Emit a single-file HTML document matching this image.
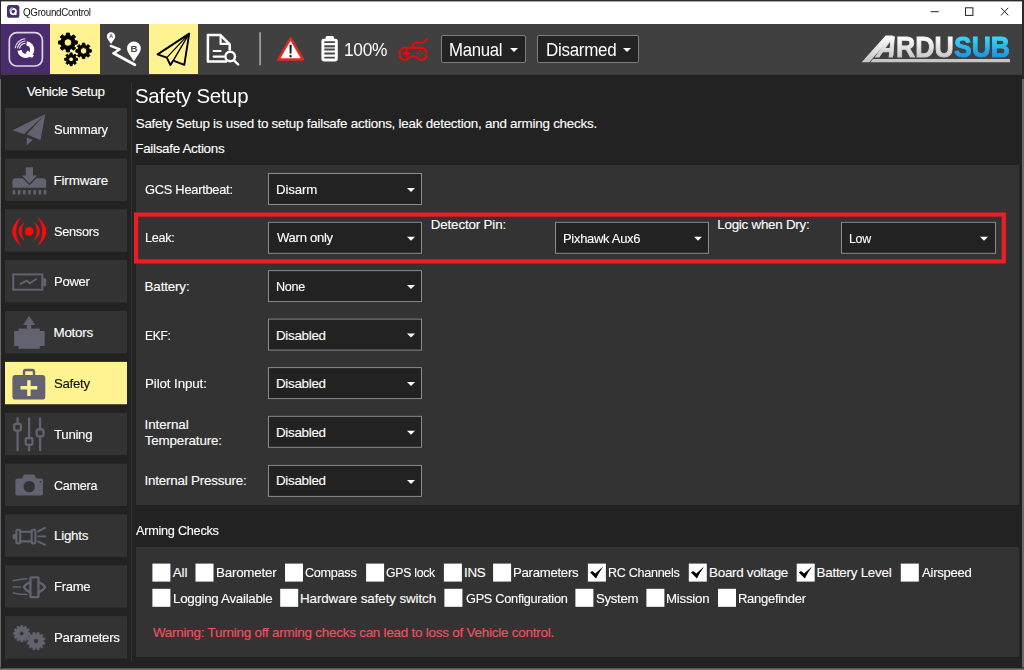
<!DOCTYPE html>
<html lang="en">
<head>
<meta charset="utf-8">
<title>QGroundControl - Safety Setup</title>
<style>
*{box-sizing:border-box;margin:0;padding:0}
html,body{width:1024px;height:670px;overflow:hidden;background:#686868}
body{position:relative;font-family:"Liberation Sans",sans-serif;color:#fff;-webkit-font-smoothing:antialiased}
.abs,.win *{position:absolute}
#frameTop{position:absolute;left:0;top:0;width:1024px;height:79px;background:#2a2a2a}
#frameBottom{position:absolute;left:0;top:667px;width:1024px;height:3px;background:linear-gradient(#3c3c3c 0,#3c3c3c 1px,#525252 1px,#525252 2px,#727272 2px)}
.win{position:absolute;left:1px;top:1px;width:1021px;height:667px;background:#222;overflow:hidden}
#titlebar{left:0;top:0;width:1021px;height:23px;background:#fff}
#toolbar{left:0;top:23px;width:1021px;height:51px;background:#404040}
.tb{top:0;height:50px}
.dd{background:#222;border:1px solid #7d7d7d;border-radius:2px}
.arrow{width:0;height:0;border-left:4.2px solid transparent;border-right:4.2px solid transparent;border-top:4.6px solid #fff}
#sidebar{left:0;top:73px;width:131px;height:594px}
.sb{left:4px;width:122px;height:42px;background:#333;transform-origin:0 0}
.sb.sel{background:#fff291}
.sb svg{left:0;top:0}
#vline{left:130px;top:82px;width:1px;height:578px;background:#343434}
.panel{background:#333}
.cb{width:18px;height:18px;background:#fff}
.combo{height:32px;width:154px;background:#222;border:1px solid #8c8c8c}
#texts{position:absolute;left:0;top:0;width:1024px;height:670px;pointer-events:none}
.t{position:absolute;white-space:pre;line-height:1;font-family:"Liberation Sans",sans-serif;transform-origin:0 0}
.t.s{-webkit-text-stroke:0.12px currentColor}
svg{overflow:visible}
#brand{left:0;top:0;width:1021px;height:74px;font-family:"Liberation Sans",sans-serif;font-weight:700;font-size:29.6px;line-height:1;white-space:nowrap;pointer-events:none}
#brand span{top:31px;display:block;transform-origin:0 100%;-webkit-background-clip:text;background-clip:text;color:transparent;-webkit-text-stroke:1px transparent}
#brand .w{background-image:linear-gradient(#fff 15%,#c6c6c6 88%)}
#brand .b{background-image:linear-gradient(#3ad8fa 15%,#1c8ee0 88%)}
</style>
</head>
<body>
<div id="frameTop"></div>
<div id="frameBottom"></div>
<div class="win">
<!-- ===== window title bar ===== -->
<div id="titlebar">
  <div id="tedge" class="abs" style="left:0;top:0;width:1021px;height:1px;background:#a9a9a9"></div>
  <svg class="abs" style="left:5.8px;top:3.9px" width="13" height="13" viewBox="0 0 13 13">
    <rect x="0" y="0" width="12.4" height="12.8" rx="2.6" fill="#4a2c6d"/>
    <circle cx="6.3" cy="6.6" r="2.7" fill="none" stroke="#fff" stroke-width="1.7"/>
    <path d="M7.2 7.6 L9.4 9.6" stroke="#fff" stroke-width="1.6"/>
    <path d="M3 6 A3.4 3.4 0 0 1 6 3" stroke="#7fb4e6" stroke-width="2" fill="none"/>
  </svg>
  <svg class="abs" style="left:900px;top:0" width="121" height="23" viewBox="0 0 121 23">
    <path d="M29.7 10.7 H37.7" stroke="#222" stroke-width="1" fill="none"/>
    <rect x="64.5" y="6.8" width="7.4" height="7.6" stroke="#222" stroke-width="1" fill="none"/>
    <path d="M100 6.8 L107.3 14.4 M107.3 6.8 L100 14.4" stroke="#222" stroke-width="1" fill="none"/>
  </svg>
</div>
<!-- ===== main toolbar ===== -->
<div id="toolbar">
  <div class="abs" style="left:0;top:50px;width:1021px;height:1px;background:#3a3a3a"></div>
  <div class="tb" style="left:0;width:49px;background:#4a2c6d"></div>
  <div class="tb" style="left:49px;width:50px;background:#fff291"></div>
  <div class="tb" style="left:148px;width:49px;background:#fff291"></div>
  <div class="dd" style="left:440px;top:11px;width:85px;height:28px"></div>
  <div class="arrow" style="left:508.9px;top:24.1px"></div>
  <div class="dd" style="left:536px;top:11px;width:102px;height:28px"></div>
  <div class="arrow" style="left:622.1px;top:23.8px"></div>
</div>
<svg class="abs" id="tbicons" style="left:-1px;top:-1px" width="1024" height="80" viewBox="0 0 1024 80">
  <!-- QGC logo -->
  <rect x="9.3" y="32.6" width="33.1" height="33.4" rx="7.6" fill="none" stroke="#dcd3e7" stroke-width="1.7"/>
  <path d="M26.62 43.35 A6.3 6.3 0 1 1 19.6 50.37" stroke="#fff" stroke-width="4.3" fill="none"/>
  <path d="M26.7 51.7 L33 56.7" stroke="#fff" stroke-width="3.1"/>
  <path d="M15.15 48.1 A10.8 10.8 0 0 1 25.3 38.8" stroke="#ece5f4" stroke-width="1.15" fill="none"/>
  <path d="M17.35 48.4 A8.6 8.6 0 0 1 25.4 41" stroke="#ece5f4" stroke-width="1.15" fill="none"/>
  <path d="M19.5 48.7 A6.4 6.4 0 0 1 25.5 43.2" stroke="#ece5f4" stroke-width="1.15" fill="none"/>
  <!-- setup gears -->
  <path fill="#000" fill-rule="evenodd" stroke="#000" stroke-width="1" stroke-linejoin="round" d="M74.91 40.87 L77.28 40.99 L77.28 44.01 L74.91 44.13 L74.01 46.31 L75.60 48.07 L73.47 50.20 L71.71 48.61 L69.53 49.51 L69.41 51.88 L66.39 51.88 L66.27 49.51 L64.09 48.61 L62.33 50.20 L60.20 48.07 L61.79 46.31 L60.89 44.13 L58.52 44.01 L58.52 40.99 L60.89 40.87 L61.79 38.69 L60.20 36.93 L62.33 34.80 L64.09 36.39 L66.27 35.49 L66.39 33.12 L69.41 33.12 L69.53 35.49 L71.71 36.39 L73.47 34.80 L75.60 36.93 L74.01 38.69 Z M64.05 42.50 a3.85 3.85 0 1 0 7.70 0 a3.85 3.85 0 1 0 -7.70 0 Z"/>
  <path fill="#000" fill-rule="evenodd" stroke="#000" stroke-width="1" stroke-linejoin="round" d="M89.35 49.57 L91.30 49.66 L91.30 52.14 L89.35 52.23 L88.61 54.02 L89.92 55.47 L88.17 57.22 L86.72 55.91 L84.93 56.65 L84.84 58.60 L82.36 58.60 L82.27 56.65 L80.48 55.91 L79.03 57.22 L77.28 55.47 L78.59 54.02 L77.85 52.23 L75.90 52.14 L75.90 49.66 L77.85 49.57 L78.59 47.78 L77.28 46.33 L79.03 44.58 L80.48 45.89 L82.27 45.15 L82.36 43.20 L84.84 43.20 L84.93 45.15 L86.72 45.89 L88.17 44.58 L89.92 46.33 L88.61 47.78 Z M80.30 50.90 a3.30 3.30 0 1 0 6.60 0 a3.30 3.30 0 1 0 -6.60 0 Z"/>
  <path fill="#000" fill-rule="evenodd" stroke="#000" stroke-width="0.9" stroke-linejoin="round" d="M75.87 58.19 L77.52 58.27 L77.52 60.33 L75.87 60.41 L75.26 61.89 L76.37 63.11 L74.91 64.57 L73.69 63.46 L72.21 64.07 L72.13 65.72 L70.07 65.72 L69.99 64.07 L68.51 63.46 L67.29 64.57 L65.83 63.11 L66.94 61.89 L66.33 60.41 L64.68 60.33 L64.68 58.27 L66.33 58.19 L66.94 56.71 L65.83 55.49 L67.29 54.03 L68.51 55.14 L69.99 54.53 L70.07 52.88 L72.13 52.88 L72.21 54.53 L73.69 55.14 L74.91 54.03 L76.37 55.49 L75.26 56.71 Z M68.70 59.30 a2.40 2.40 0 1 0 4.80 0 a2.40 2.40 0 1 0 -4.80 0 Z"/>
  <!-- plan icon -->
  <path fill="#fff" d="M111 44 C109.4 41 106.8 39 106.8 36.5 A4.2 4.2 0 0 1 115.2 36.5 C115.2 39 112.6 41 111 44 Z"/>
  <text x="111" y="38.4" font-family="Liberation Sans, sans-serif" font-weight="700" font-size="5.2" fill="#4a4a4a" text-anchor="middle">A</text>
  <path fill="none" stroke="#fff" stroke-width="2.3" stroke-linecap="round" stroke-linejoin="round" d="M110.7 45.9 L119.7 49.3 L113.7 53.2"/>
  <path fill="none" stroke="#fff" stroke-width="2.8" stroke-linecap="round" d="M113.7 53.2 L134.8 64.8"/>
  <path fill="#fff" d="M133.9 61.6 C131.3 56.6 127 52.7 127 48.3 A6.9 6.9 0 0 1 140.8 48.3 C140.8 52.7 136.5 56.6 133.9 61.6 Z"/>
  <text x="133.9" y="52" font-family="Liberation Sans, sans-serif" font-weight="700" font-size="9.6" fill="#4a4a4a" text-anchor="middle">B</text>
  <!-- fly icon -->
  <path fill="none" stroke="#000" stroke-width="1.9" stroke-linejoin="round" d="M189.2 33.6 L157.6 54.4 L166.8 57.7 L170.4 65 L173.3 60.6 L184.3 64.8 Z"/>
  <path fill="none" stroke="#000" stroke-width="1.2" stroke-linejoin="round" d="M189.2 33.6 L166.8 57.7 M189.2 33.6 L173.3 60.6 M189.2 33.6 L170.4 65"/>
  <!-- analyze icon -->
  <path fill="none" stroke="#fff" stroke-width="2.5" stroke-linejoin="round" d="M227 61.5 H207.9 V34.9 H220.2 L229.7 44.4 V50.5"/>
  <path fill="none" stroke="#fff" stroke-width="2.2" stroke-linejoin="round" d="M220.6 35.5 V43.9 H229.2"/>
  <path fill="none" stroke="#fff" stroke-width="2.1" stroke-linecap="round" d="M213.6 51 H220.6 M213.6 56.6 H224"/>
  <circle cx="230.2" cy="56.5" r="4.8" fill="#404040" stroke="#fff" stroke-width="2.4"/>
  <path d="M234.2 60.6 L238.2 64.5" stroke="#fff" stroke-width="2.4" stroke-linecap="round"/>
  <!-- separator -->
  <rect x="259.2" y="32.3" width="1.8" height="33" fill="#9c9c9c"/>
  <!-- message / warning triangle -->
  <path fill="#fff" stroke="#e12a21" stroke-width="2.5" stroke-linejoin="round" d="M290.6 38.3 L302.9 59.5 H278.4 Z"/>
  <text x="290.6" y="56.8" font-family="Liberation Sans, sans-serif" font-weight="400" font-size="16.6" fill="#000" stroke="#000" stroke-width="0.35" text-anchor="middle">!</text>
  <!-- battery -->
  <rect x="325.6" y="35.9" width="8.4" height="5" rx="1.6" fill="#fff"/>
  <rect x="321.4" y="38.7" width="16.4" height="22.7" rx="2.4" fill="#fff"/>
  <rect x="324.3" y="47" width="10.6" height="1.8" fill="#b4b4b4"/>
  <g fill="#474747">
    <rect x="324.3" y="41.2" width="10.6" height="1.9" rx="0.4"/>
    <rect x="324.3" y="45.2" width="10.6" height="1.9" rx="0.4"/>
    <rect x="324.3" y="48.7" width="10.6" height="1.9" rx="0.4"/>
    <rect x="324.3" y="52.6" width="10.6" height="1.9" rx="0.4"/>
    <rect x="324.3" y="56.7" width="10.6" height="1.9" rx="0.4"/>
  </g>
  <!-- joystick / RC -->
  <g fill="none" stroke="#ee0808" stroke-width="1.9" stroke-linecap="round" stroke-linejoin="round">
    <path d="M404.8 47.8 H421.2 A5.2 5.2 0 0 1 426.4 53 V55 A4.9 4.9 0 0 1 417.6 57.9 Q413 54.6 408.4 57.9 A4.9 4.9 0 0 1 399.6 55 V53 A5.2 5.2 0 0 1 404.8 47.8 Z"/>
    <path d="M412.8 46.6 C412.8 39.8 420 44.6 424 42 C425.6 41 426.4 40 426.8 38.8"/>
    <path d="M406.6 50.6 V56 M403.9 53.3 H409.3" stroke-width="2.2"/>
  </g>
  <g fill="#ee0808">
    <circle cx="419.8" cy="50.9" r="1"/><circle cx="419.8" cy="55.7" r="1"/>
    <circle cx="417.4" cy="53.3" r="1"/><circle cx="422.2" cy="53.3" r="1"/>
  </g>
  <!-- ArduSub brand -->
  <defs>
    <linearGradient id="gW" x1="0" y1="0" x2="0" y2="1"><stop offset="0" stop-color="#ffffff"/><stop offset="1" stop-color="#c4c4c4"/></linearGradient>
    <linearGradient id="gB" x1="0" y1="0" x2="0" y2="1"><stop offset="0" stop-color="#35d6f8"/><stop offset="1" stop-color="#1b8fe0"/></linearGradient>
  </defs>
  <path fill="url(#gW)" d="M861.6 62.2 L885.6 35.4 H893 L869.2 62.2 Z"/>
  <path fill="#c6c6c6" d="M873 58.9 H1010 V62.2 H870.2 Z"/>
</svg>
<div id="brand"><span class="w" style="left:872.0px;transform:scaleX(0.88) skewX(-24deg)">A</span><span class="w" style="left:895.3px;transform:scaleX(0.9)">RDU</span><span class="b" style="left:953.4px;transform:scaleX(0.895)">SUB</span></div>
<!-- ===== vehicle setup sidebar ===== -->
<div id="sidebar">
  <div class="sb" style="top:34px;transform:translateY(0.0px) scaleY(1.008)"></div>
  <div class="sb" style="top:84px;transform:translateY(0.6px) scaleY(1.008)"></div>
  <div class="sb" style="top:135px;transform:translateY(0.3px) scaleY(1.008)"></div>
  <div class="sb" style="top:186px;transform:translateY(0.1px) scaleY(1.008)"></div>
  <div class="sb" style="top:237px;transform:translateY(0.0px) scaleY(1.008)"></div>
  <div class="sb sel" style="top:287px;transform:translateY(0.9px) scaleY(1.008)"></div>
  <div class="sb" style="top:338px;transform:translateY(0.8px) scaleY(1.008)"></div>
  <div class="sb" style="top:389px;transform:translateY(0.6px) scaleY(1.008)"></div>
  <div class="sb" style="top:440px;transform:translateY(0.4px) scaleY(1.008)"></div>
  <div class="sb" style="top:491px;transform:translateY(0.3px) scaleY(1.008)"></div>
  <div class="sb" style="top:542px;transform:translateY(0.1px) scaleY(1.008)"></div>
</div>
<div id="vline"></div>
<svg class="abs" id="sbicons" style="left:-1px;top:-1px" width="140" height="670" viewBox="0 0 140 670">
  <!-- summary -->
  <g fill="#626270">
    <path d="M12.6 130.3 L45.4 114.1 L24 134.2 Z"/>
    <path d="M45.4 114.1 L40.5 139.9 L26.8 134.5 Z"/>
    <path d="M26.8 137.4 L32.8 139.7 L26.8 145.5 Z"/>
  </g>
  <!-- firmware -->
  <g fill="#626270">
    <path d="M25.8 167.2 H33 V175.4 H37.2 L29.4 183.4 L21.8 175.4 H25.8 Z"/>
    <path d="M12.4 187.8 V181.6 Q12.4 178.2 15.8 178.2 H22.6 L29.4 185.2 L36.4 178.2 H42.8 Q46.2 178.2 46.2 181.6 V187.8 Z"/>
    <rect x="12.60" y="190.1" width="2.7" height="4.4"/><rect x="17.78" y="190.1" width="2.7" height="4.4"/><rect x="22.96" y="190.1" width="2.7" height="4.4"/><rect x="28.14" y="190.1" width="2.7" height="4.4"/><rect x="33.32" y="190.1" width="2.7" height="4.4"/><rect x="38.50" y="190.1" width="2.7" height="4.4"/><rect x="43.68" y="190.1" width="2.7" height="4.4"/>
  </g>
  <!-- sensors -->
  <g fill="#fb0a0a">
    <circle cx="29.25" cy="231.4" r="4.4"/>
    <path stroke="#fb0a0a" stroke-width="0.5" stroke-linejoin="round" d="M20.40 217.40 Q4.60 231.40 20.40 245.40 Q11.40 231.40 20.40 217.40 Z M38.10 217.40 Q53.90 231.40 38.10 245.40 Q47.10 231.40 38.10 217.40 Z M24.00 222.60 Q13.60 231.40 24.00 240.20 Q18.80 231.40 24.00 222.60 Z M34.50 222.60 Q44.90 231.40 34.50 240.20 Q39.70 231.40 34.50 222.60 Z"/>
  </g>
  <!-- power -->
  <g fill="none" stroke="#626270">
    <rect x="13.3" y="274.4" width="29" height="15.3" stroke-width="2"/>
    <path d="M19.8 284.2 L26.8 280.6 L29.6 283.2 L36.8 278.8" stroke-width="1.9"/>
  </g>
  <path d="M43.2 277.6 L46.2 279 V285.4 L43.2 286.8 Z" fill="#626270"/>
  <!-- motors -->
  <g fill="#626270">
    <path d="M29.1 315.8 L35.1 325 H31.3 V329 H26.9 V325 H23.1 Z"/>
    <rect x="18.5" y="328.6" width="21.3" height="20.2"/>
    <rect x="14.1" y="331" width="30.5" height="15"/>
  </g>
  <!-- safety -->
  <rect x="12.4" y="374.9" width="32.9" height="24.7" rx="3.2" fill="#626270"/>
  <rect x="24" y="370" width="10" height="7" rx="1.8" fill="none" stroke="#626270" stroke-width="2.4"/>
  <path d="M20.5 387.7 H37.3 M28.9 380.2 V396" stroke="#fff291" stroke-width="3.4" fill="none"/>
  <!-- tuning -->
  <g fill="none" stroke="#626270" stroke-width="2.3" stroke-linecap="round">
    <path d="M17.6 418.4 V450.2 M29.1 418.4 V450.2 M40.1 418.4 V450.2"/>
    <rect x="14.2" y="423.8" width="6.8" height="6.8" rx="1.8" fill="#333"/>
    <rect x="25.7" y="438" width="6.8" height="6.8" rx="1.8" fill="#333"/>
    <rect x="36.7" y="429.5" width="6.8" height="6.8" rx="1.8" fill="#333"/>
  </g>
  <!-- camera -->
  <path fill="#626270" fill-rule="evenodd" d="M17.4 478.4 H22 L24.2 474.6 H34.2 L36.4 478.4 H41 Q43 478.4 43 480.4 V493.6 Q43 495.6 41 495.6 H17.4 Q15.4 495.6 15.4 493.6 V480.4 Q15.4 478.4 17.4 478.4 Z M23.5 486.6 a5.7 5.7 0 1 0 11.4 0 a5.7 5.7 0 1 0 -11.4 0 Z M39.6 481.8 a0.9 0.9 0 1 0 1.8 0 a0.9 0.9 0 1 0 -1.8 0 Z"/>
  <!-- lights -->
  <g fill="none" stroke="#626270" stroke-width="2.1" stroke-linecap="round">
    <rect x="16.4" y="529.8" width="3.8" height="13.6" rx="1.2"/>
    <rect x="31.6" y="529.8" width="3.8" height="13.6" rx="1.2"/>
    <path d="M20.2 531.8 H31.6 M20.2 541.4 H31.6"/>
    <rect x="13.4" y="534.6" width="2.6" height="4" rx="0.8" fill="#626270" stroke-width="1.4"/>
    <path d="M38 531.4 L45 527.9 M38.2 536.4 H45.4 M38 541.4 L45 544.9" stroke-width="1.8"/>
  </g>
  <!-- frame -->
  <g fill="none" stroke="#626270" stroke-width="2.3" stroke-linejoin="round" stroke-linecap="round">
    <rect x="30.4" y="577.3" width="8.1" height="19.9" rx="0.6"/>
    <path d="M30.2 582 Q25.4 584.2 23.8 587.1 Q25.4 590 30.2 592.4"/>
    <path d="M38.7 582 Q43.5 584.2 45.1 587.1 Q43.5 590 38.7 592.4"/>
    <path d="M13.2 580.7 Q20 579.2 27 578.7 M13.2 587.1 H20.2 M13.2 593 Q20 594.6 27 594.6" stroke-width="1.5"/>
  </g>
  <!-- parameters -->
  <path fill="#626270" fill-rule="evenodd" stroke="#626270" stroke-width="0.5" stroke-linejoin="round" d="M28.52 632.52 L30.03 632.55 L30.03 634.65 L28.52 634.68 L28.14 636.07 L29.44 636.86 L28.39 638.68 L27.06 637.94 L26.04 638.96 L26.78 640.29 L24.96 641.34 L24.17 640.04 L22.78 640.42 L22.75 641.93 L20.65 641.93 L20.62 640.42 L19.23 640.04 L18.44 641.34 L16.62 640.29 L17.36 638.96 L16.34 637.94 L15.01 638.68 L13.96 636.86 L15.26 636.07 L14.88 634.68 L13.37 634.65 L13.37 632.55 L14.88 632.52 L15.26 631.13 L13.96 630.34 L15.01 628.52 L16.34 629.26 L17.36 628.24 L16.62 626.91 L18.44 625.86 L19.23 627.16 L20.62 626.78 L20.65 625.27 L22.75 625.27 L22.78 626.78 L24.17 627.16 L24.96 625.86 L26.78 626.91 L26.04 628.24 L27.06 629.26 L28.39 628.52 L29.44 630.34 L28.14 631.13 Z M19.60 633.60 a2.10 2.10 0 1 0 4.20 0 a2.10 2.10 0 1 0 -4.20 0 Z"/>
  <path fill="#626270" fill-rule="evenodd" stroke="#626270" stroke-width="0.5" stroke-linejoin="round" d="M43.46 641.88 L45.02 642.34 L44.43 644.54 L42.85 644.15 L42.07 645.51 L43.19 646.68 L41.58 648.29 L40.41 647.17 L39.05 647.95 L39.44 649.53 L37.24 650.12 L36.78 648.56 L35.22 648.56 L34.76 650.12 L32.56 649.53 L32.95 647.95 L31.59 647.17 L30.42 648.29 L28.81 646.68 L29.93 645.51 L29.15 644.15 L27.57 644.54 L26.98 642.34 L28.54 641.88 L28.54 640.32 L26.98 639.86 L27.57 637.66 L29.15 638.05 L29.93 636.69 L28.81 635.52 L30.42 633.91 L31.59 635.03 L32.95 634.25 L32.56 632.67 L34.76 632.08 L35.22 633.64 L36.78 633.64 L37.24 632.08 L39.44 632.67 L39.05 634.25 L40.41 635.03 L41.58 633.91 L43.19 635.52 L42.07 636.69 L42.85 638.05 L44.43 637.66 L45.02 639.86 L43.46 640.32 Z M33.70 641.10 a2.30 2.30 0 1 0 4.60 0 a2.30 2.30 0 1 0 -4.60 0 Z"/>
</svg>
<!-- ===== safety setup content ===== -->
<div id="content" style="left:131px;top:73px;width:890px;height:594px">
  <div class="panel" id="failsafe" style="left:4px;top:91px;width:883px;height:340px">
    <div class="combo" id="cb-gcs" style="left:132px;top:8px"><div class="arrow" style="left:137.7px;top:13.9px"></div></div>
    <div class="combo" id="cb-leak" style="left:132px;top:56px;transform:translate(0px,0.8px)"><div class="arrow" style="left:137.7px;top:13.9px"></div></div>
    <div class="combo" id="cb-battery" style="left:132px;top:105px;transform:translate(0px,0.1px)"><div class="arrow" style="left:137.7px;top:13.9px"></div></div>
    <div class="combo" id="cb-ekf" style="left:132px;top:153px;transform:translate(0px,0.6px)"><div class="arrow" style="left:137.7px;top:13.9px"></div></div>
    <div class="combo" id="cb-pilot" style="left:132px;top:202px;transform:translate(0px,0.1px)"><div class="arrow" style="left:137.7px;top:13.9px"></div></div>
    <div class="combo" id="cb-temp" style="left:132px;top:250px;transform:translate(0px,0.8px)"><div class="arrow" style="left:137.7px;top:13.9px"></div></div>
    <div class="combo" id="cb-pressure" style="left:132px;top:299px;transform:translate(0px,0.9px)"><div class="arrow" style="left:137.7px;top:13.9px"></div></div>
    <div class="combo" id="cb-pin" style="left:419px;top:56px;transform:translate(0px,0.8px)"><div class="arrow" style="left:137.7px;top:13.9px"></div></div>
    <div class="combo" id="cb-logic" style="left:705px;top:56px;transform:translate(0px,0.8px);width:155px"><div class="arrow" style="left:137.7px;top:13.9px"></div></div>
  </div>
  <div class="panel" id="arming" style="left:4px;top:473px;width:883px;height:110px">
    <div class="cb" style="left:16px;top:16px;transform:translate(0.4px,0.6px)"></div>
    <div class="cb" style="left:59px;top:16px;transform:translate(0.5px,0.6px)"></div>
    <div class="cb" style="left:149px;top:16px;transform:translate(0.0px,0.6px)"></div>
    <div class="cb" style="left:230px;top:16px;transform:translate(0.1px,0.6px)"></div>
    <div class="cb" style="left:307px;top:16px;transform:translate(0.9px,0.6px)"></div>
    <div class="cb" style="left:357px;top:16px;transform:translate(0.1px,0.6px)"></div>
    <div class="cb" style="left:451px;top:16px;transform:translate(0.9px,0.6px)"><svg style="left:0;top:0" width="18" height="18" viewBox="0 0 18 18"><path fill="#000" d="M2.2 8.9 L4.3 7.5 L7.5 10 Q11.2 6.2 15.3 3.1 Q11.2 8.4 8.1 14.8 Z"/></svg></div>
    <div class="cb" style="left:552px;top:16px;transform:translate(0.8px,0.6px)"><svg style="left:0;top:0" width="18" height="18" viewBox="0 0 18 18"><path fill="#000" d="M2.2 8.9 L4.3 7.5 L7.5 10 Q11.2 6.2 15.3 3.1 Q11.2 8.4 8.1 14.8 Z"/></svg></div>
    <div class="cb" style="left:660px;top:16px;transform:translate(0.7px,0.6px)"><svg style="left:0;top:0" width="18" height="18" viewBox="0 0 18 18"><path fill="#000" d="M2.2 8.9 L4.3 7.5 L7.5 10 Q11.2 6.2 15.3 3.1 Q11.2 8.4 8.1 14.8 Z"/></svg></div>
    <div class="cb" style="left:764px;top:16px;transform:translate(0.8px,0.6px)"></div>
    <div class="cb" style="left:16px;top:41px;transform:translate(0.4px,0.8px)"></div>
    <div class="cb" style="left:144px;top:41px;transform:translate(0.2px,0.8px)"></div>
    <div class="cb" style="left:308px;top:41px;transform:translate(0.4px,0.8px)"></div>
    <div class="cb" style="left:439px;top:41px;transform:translate(0.4px,0.8px)"></div>
    <div class="cb" style="left:510px;top:41px;transform:translate(0.4px,0.8px)"></div>
    <div class="cb" style="left:582px;top:41px;transform:translate(0.0px,0.8px)"></div>
  </div>
</div>
<svg class="abs" id="hl" style="left:-1px;top:-1px" width="1024" height="670" viewBox="0 0 1024 670"><rect x="136.1" y="214.6" width="867.7" height="46.8" fill="none" stroke="#ee1c24" stroke-width="4.2"/></svg>
</div><!-- /.win -->

<div id="texts">
<span class="t" style="left:23.2px;top:8px;font-size:10.4px;letter-spacing:-0.30px;transform:scaleX(0.940);color:#111">QGroundControl</span>
<span class="t" style="left:344.4px;top:42px;font-size:17.6px;letter-spacing:-0.30px;transform:scaleX(0.983);color:#fff">100%</span>
<span class="t" style="left:449.1px;top:42px;font-size:17.6px;letter-spacing:-0.30px;transform:scaleX(0.952);color:#fff">Manual</span>
<span class="t" style="left:545.5px;top:42px;font-size:17.6px;letter-spacing:-0.30px;transform:scaleX(0.966);color:#fff">Disarmed</span>
<span class="t s" style="left:26.7px;top:85px;font-size:13.4px;letter-spacing:-0.30px;color:#fff">Vehicle Setup</span>
<span class="t s" style="left:53.5px;top:123px;font-size:13.4px;letter-spacing:-0.30px;transform:scaleX(0.972);color:#fff">Summary</span>
<span class="t s" style="left:53.5px;top:174px;font-size:13.4px;letter-spacing:-0.16px;color:#fff">Firmware</span>
<span class="t s" style="left:53.5px;top:225px;font-size:13.4px;letter-spacing:-0.30px;transform:scaleX(0.953);color:#fff">Sensors</span>
<span class="t s" style="left:53.6px;top:275px;font-size:13.4px;letter-spacing:-0.30px;transform:scaleX(0.975);color:#fff">Power</span>
<span class="t s" style="left:53.5px;top:326px;font-size:13.4px;letter-spacing:-0.26px;color:#fff">Motors</span>
<span class="t s" style="left:53.5px;top:377px;font-size:13.4px;letter-spacing:-0.30px;transform:scaleX(0.988);color:#111">Safety</span>
<span class="t s" style="left:54.4px;top:428px;font-size:13.4px;letter-spacing:-0.30px;transform:scaleX(0.990);color:#fff">Tuning</span>
<span class="t s" style="left:54.1px;top:479px;font-size:13.4px;letter-spacing:-0.30px;transform:scaleX(0.942);color:#fff">Camera</span>
<span class="t s" style="left:54.0px;top:529px;font-size:13.4px;letter-spacing:-0.27px;color:#fff">Lights</span>
<span class="t s" style="left:53.6px;top:580px;font-size:13.4px;letter-spacing:-0.30px;transform:scaleX(0.974);color:#fff">Frame</span>
<span class="t s" style="left:53.6px;top:631px;font-size:13.4px;letter-spacing:-0.30px;transform:scaleX(0.992);color:#fff">Parameters</span>
<span class="t" style="left:135.2px;top:86px;font-size:20.6px;letter-spacing:-0.30px;transform:scaleX(0.990);color:#fff">Safety Setup</span>
<span class="t s" style="left:135.7px;top:117px;font-size:13.4px;letter-spacing:-0.23px;color:#fff">Safety Setup is used to setup failsafe actions, leak detection, and arming checks.</span>
<span class="t s" style="left:135.3px;top:142px;font-size:13.4px;letter-spacing:-0.30px;color:#fff">Failsafe Actions</span>
<span class="t s" style="left:144.6px;top:183px;font-size:13.4px;letter-spacing:-0.30px;transform:scaleX(0.963);color:#fff">GCS Heartbeat:</span>
<span class="t s" style="left:144.7px;top:231px;font-size:13.4px;letter-spacing:-0.30px;transform:scaleX(0.947);color:#fff">Leak:</span>
<span class="t s" style="left:144.6px;top:280px;font-size:13.4px;letter-spacing:-0.16px;color:#fff">Battery:</span>
<span class="t s" style="left:145.0px;top:329px;font-size:13.4px;letter-spacing:-0.30px;transform:scaleX(0.893);color:#fff">EKF:</span>
<span class="t s" style="left:144.7px;top:377px;font-size:13.4px;letter-spacing:-0.10px;transform:scaleX(0.996);color:#fff">Pilot Input:</span>
<span class="t s" style="left:144.5px;top:418px;font-size:13.4px;letter-spacing:-0.08px;color:#fff">Internal</span>
<span class="t s" style="left:144.7px;top:434px;font-size:13.4px;letter-spacing:-0.14px;color:#fff">Temperature:</span>
<span class="t s" style="left:144.5px;top:474px;font-size:13.4px;letter-spacing:-0.20px;color:#fff">Internal Pressure:</span>
<span class="t s" style="left:430.8px;top:218px;font-size:13.4px;letter-spacing:-0.17px;color:#fff">Detector Pin:</span>
<span class="t s" style="left:717.3px;top:218px;font-size:13.4px;letter-spacing:-0.26px;color:#fff">Logic when Dry:</span>
<span class="t s" style="left:276.1px;top:183px;font-size:13.4px;letter-spacing:-0.12px;transform:scaleX(0.991);color:#fff">Disarm</span>
<span class="t s" style="left:277.0px;top:231px;font-size:13.4px;letter-spacing:-0.30px;transform:scaleX(0.978);color:#fff">Warn only</span>
<span class="t s" style="left:276.1px;top:280px;font-size:13.4px;letter-spacing:-0.30px;transform:scaleX(0.941);color:#fff">None</span>
<span class="t s" style="left:276.0px;top:329px;font-size:13.4px;letter-spacing:-0.30px;color:#fff">Disabled</span>
<span class="t s" style="left:276.0px;top:377px;font-size:13.4px;letter-spacing:-0.30px;color:#fff">Disabled</span>
<span class="t s" style="left:276.0px;top:426px;font-size:13.4px;letter-spacing:-0.30px;color:#fff">Disabled</span>
<span class="t s" style="left:276.0px;top:474px;font-size:13.4px;letter-spacing:-0.30px;color:#fff">Disabled</span>
<span class="t s" style="left:562.6px;top:232px;font-size:13.4px;letter-spacing:-0.30px;transform:scaleX(0.968);color:#fff">Pixhawk Aux6</span>
<span class="t s" style="left:849.3px;top:232px;font-size:13.4px;letter-spacing:-0.30px;transform:scaleX(0.924);color:#fff">Low</span>
<span class="t s" style="left:136.0px;top:524px;font-size:13.4px;letter-spacing:-0.30px;transform:scaleX(0.951);color:#fff">Arming Checks</span>
<span class="t s" style="left:172.8px;top:566px;font-size:13.4px;letter-spacing:-0.14px;color:#fff">All</span>
<span class="t s" style="left:216.0px;top:566px;font-size:13.4px;letter-spacing:-0.25px;transform:scaleX(1.003);color:#fff">Barometer</span>
<span class="t s" style="left:305.3px;top:566px;font-size:13.4px;letter-spacing:-0.30px;transform:scaleX(0.945);color:#fff">Compass</span>
<span class="t s" style="left:385.8px;top:566px;font-size:13.4px;letter-spacing:-0.30px;transform:scaleX(0.915);color:#fff">GPS lock</span>
<span class="t s" style="left:464.0px;top:566px;font-size:13.4px;letter-spacing:-0.30px;color:#fff">INS</span>
<span class="t s" style="left:512.9px;top:566px;font-size:13.4px;letter-spacing:-0.30px;transform:scaleX(0.986);color:#fff">Parameters</span>
<span class="t s" style="left:607.6px;top:566px;font-size:13.4px;letter-spacing:-0.30px;transform:scaleX(0.937);color:#fff">RC Channels</span>
<span class="t s" style="left:709.1px;top:566px;font-size:13.4px;letter-spacing:-0.29px;color:#fff">Board voltage</span>
<span class="t s" style="left:816.6px;top:566px;font-size:13.4px;letter-spacing:-0.26px;color:#fff">Battery Level</span>
<span class="t s" style="left:921.6px;top:566px;font-size:13.4px;letter-spacing:-0.30px;transform:scaleX(0.984);color:#fff">Airspeed</span>
<span class="t s" style="left:172.8px;top:592px;font-size:13.4px;letter-spacing:-0.30px;transform:scaleX(0.997);color:#fff">Logging Available</span>
<span class="t s" style="left:300.0px;top:592px;font-size:13.4px;letter-spacing:-0.11px;color:#fff">Hardware safety switch</span>
<span class="t s" style="left:465.5px;top:592px;font-size:13.4px;letter-spacing:-0.30px;transform:scaleX(0.953);color:#fff">GPS Configuration</span>
<span class="t s" style="left:596.2px;top:592px;font-size:13.4px;letter-spacing:-0.30px;transform:scaleX(0.985);color:#fff">System</span>
<span class="t s" style="left:665.9px;top:592px;font-size:13.4px;letter-spacing:-0.25px;transform:scaleX(0.992);color:#fff">Mission</span>
<span class="t s" style="left:738.1px;top:592px;font-size:13.4px;letter-spacing:-0.30px;transform:scaleX(0.973);color:#fff">Rangefinder</span>
<span class="t s" style="left:152.9px;top:626px;font-size:13.4px;letter-spacing:-0.21px;color:#ee545e">Warning: Turning off arming checks can lead to loss of Vehicle control.</span>
</div>
</body>
</html>
